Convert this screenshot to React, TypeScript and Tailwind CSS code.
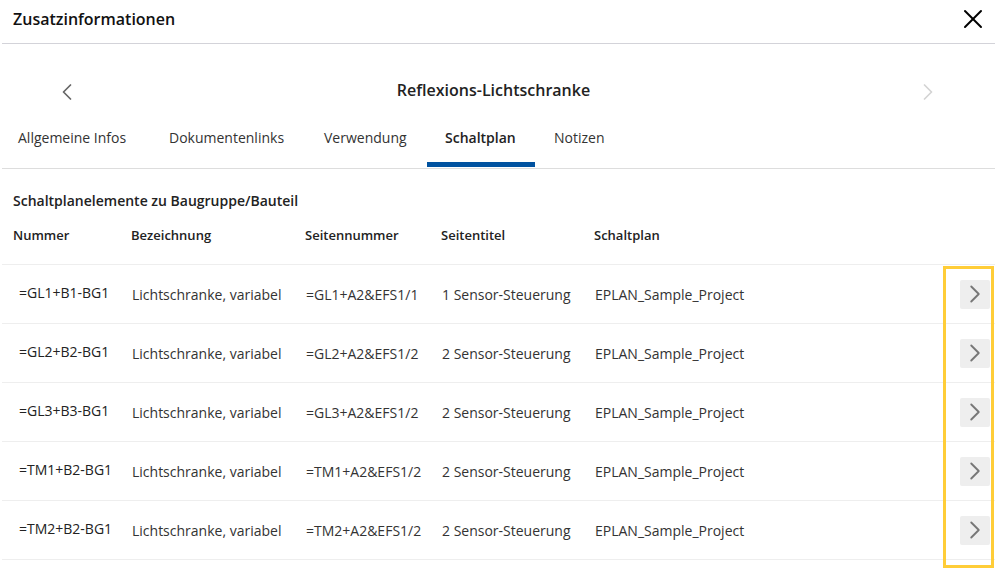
import { ChevronLeft, ChevronRight, X } from "lucide-react";

const rows = [
  { nr: "=GL1+B1-BG1", bez: "Lichtschranke, variabel", seite: "=GL1+A2&EFS1/1", titel: "1 Sensor-Steuerung", plan: "EPLAN_Sample_Project" },
  { nr: "=GL2+B2-BG1", bez: "Lichtschranke, variabel", seite: "=GL2+A2&EFS1/2", titel: "2 Sensor-Steuerung", plan: "EPLAN_Sample_Project" },
  { nr: "=GL3+B3-BG1", bez: "Lichtschranke, variabel", seite: "=GL3+A2&EFS1/2", titel: "2 Sensor-Steuerung", plan: "EPLAN_Sample_Project" },
  { nr: "=TM1+B2-BG1", bez: "Lichtschranke, variabel", seite: "=TM1+A2&EFS1/2", titel: "2 Sensor-Steuerung", plan: "EPLAN_Sample_Project" },
  { nr: "=TM2+B2-BG1", bez: "Lichtschranke, variabel", seite: "=TM2+A2&EFS1/2", titel: "2 Sensor-Steuerung", plan: "EPLAN_Sample_Project" },
];

const tabs = [
  { label: "Allgemeine Infos", w: "w-[151px]", pl: "pl-[16px]" },
  { label: "Dokumentenlinks", w: "w-[155px]", pl: "pl-[16px]" },
  { label: "Verwendung", w: "w-[119px]", pl: "pl-[16px]" },
  { label: "Schaltplan", w: "w-[108px]", pl: "pl-[18px]", active: true },
  { label: "Notizen", w: "w-[90px]", pl: "pl-[19px]" },
];

export default function App() {
  return (
    <div
      className="relative w-[997px] h-[574px] bg-white overflow-hidden text-[#222]"
      style={{ fontFamily: '"Open Sans", "Noto Sans", sans-serif' }}
    >
      {/* Header */}
      <div className="mx-[2px] h-[44px] flex items-center justify-between border-b border-[#d3d3d9]">
        <h1 className="pl-[11px] pb-[6px] text-[16px] font-semibold text-[#111]">Zusatzinformationen</h1>
        <button className="mr-[6px] mb-[6px] text-black">
          <X size={32} strokeWidth={1.5} />
        </button>
      </div>

      {/* Title navigation */}
      <div className="h-[92px] flex items-center justify-between pl-[53px] pr-[55px]">
        <ChevronLeft size={28} strokeWidth={1.5} className="text-[#666] mt-[4px]" />
        <div className="text-[16px] font-semibold text-[#222] mr-[8px]">Reflexions-Lichtschranke</div>
        <ChevronRight size={28} strokeWidth={1.5} className="text-[#d4d4d4] mt-[4px]" />
      </div>

      {/* Tabs */}
      <div className="mx-[2px] -mt-[32px] flex border-b border-[#dddddd]">
        {tabs.map((t) => (
          <div key={t.label} className={`${t.w} h-[64px] flex flex-col`}>
            <div
              className={`flex-1 flex items-center pt-[8px] ${t.pl} text-[14px] ${
                t.active ? "font-semibold text-[#222]" : "text-[#333]"
              }`}
            >
              {t.label}
            </div>
            <div className={`h-[5px] mb-[1px] ${t.active ? "bg-[#0052a0]" : "bg-transparent"}`} />
          </div>
        ))}
      </div>

      {/* Section */}
      <div className="pl-[13px] pt-[21px] text-[14px] font-semibold text-[#222]">
        Schaltplanelemente zu Baugruppe/Bauteil
      </div>

      {/* Table header */}
      <div className="mx-[2px] h-[54px] flex items-start pt-[15px] text-[13px] font-semibold text-[#222] border-b border-[#eeeeee]">
        <div className="w-[118px] pl-[11px]">Nummer</div>
        <div className="w-[174px] pl-[11px]">Bezeichnung</div>
        <div className="w-[136px] pl-[11px]">Seitennummer</div>
        <div className="w-[153px] pl-[11px]">Seitentitel</div>
        <div className="flex-1 pl-[11px]">Schaltplan</div>
      </div>

      {/* Rows */}
      {rows.map((r) => (
        <div key={r.nr} className="mx-[2px] h-[59px] flex items-center text-[14px] text-[#333] border-b border-[#eeeeee]">
          <div className="w-[118px] pl-[17px] pb-[4px] text-[#222]">{r.nr}</div>
          <div className="w-[174px] pl-[12px]">{r.bez}</div>
          <div className="w-[136px] pl-[12px]">{r.seite}</div>
          <div className="w-[153px] pl-[12px]">{r.titel}</div>
          <div className="flex-1 pl-[12px]">{r.plan}</div>
          <button className="mr-[5px] w-[30px] h-[29px] rounded-[2px] bg-[#eeeeee] flex items-center justify-center text-[#777]">
            <ChevronRight size={32} strokeWidth={1.5} />
          </button>
        </div>
      ))}

      {/* Highlight overlay */}
      <div className="absolute left-[943px] top-[266px] w-[51px] h-[302px] border-[3px] border-[#ffcd38] pointer-events-none" />
    </div>
  );
}
